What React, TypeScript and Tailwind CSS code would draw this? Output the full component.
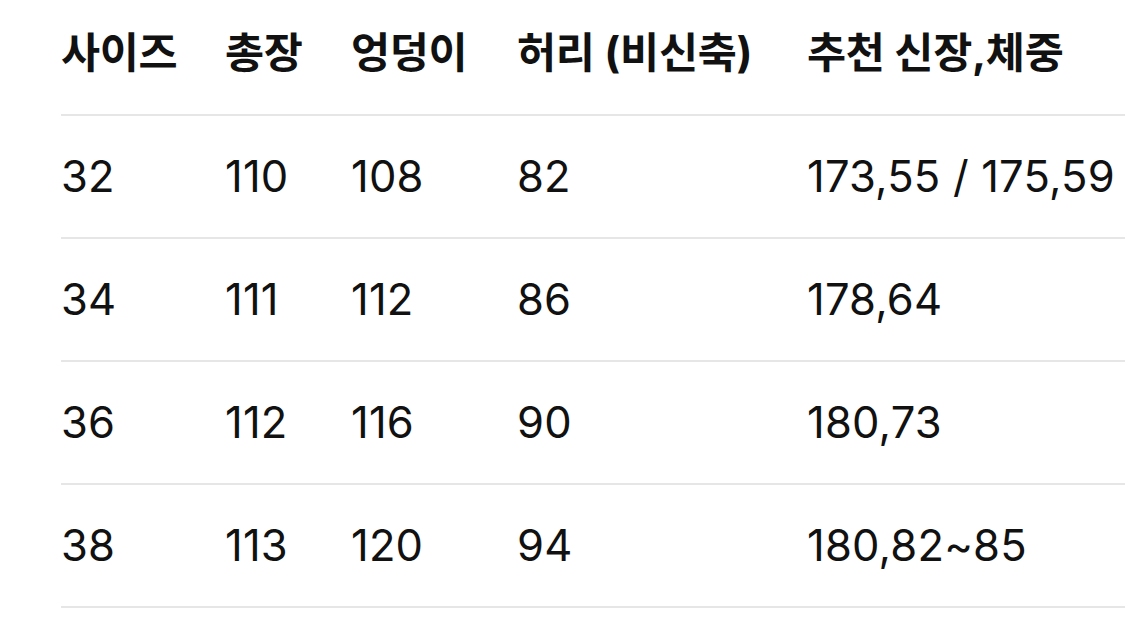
import React from "react";

const rows = [
  ["32", "110", "108", "82", "173,55 / 175,59"],
  ["34", "111", "112", "86", "178,64"],
  ["36", "112", "116", "90", "180,73"],
  ["38", "113", "120", "94", "180,82~85"],
];

const widths = ["w-[164px]", "w-[126px]", "w-[166px]", "w-[290px]", "flex-1"];

export default function App() {
  return (
    <div
      className="w-[1125px] h-[643px] bg-white pl-[61px] text-[#111] overflow-hidden"
      style={{ fontFamily: 'Inter, "Noto Sans CJK KR", sans-serif' }}
    >
      <div className="flex h-[116px] items-center pb-[8px] border-b-2 border-[#e6e6e6] text-[42.5px] font-bold tracking-[-0.3px]">
        {["사이즈", "총장", "엉덩이", "허리 (비신축)", "추천 신장,체중"].map((h, i) => (
          <div key={i} className={`${widths[i]} whitespace-nowrap`}>{h}</div>
        ))}
      </div>
      {rows.map((r, ri) => (
        <div key={ri} className="flex h-[123px] items-center border-b-2 border-[#e6e6e6] text-[43.5px] font-normal tracking-[0.2px]">
          {r.map((c, i) => (
            <div key={i} className={`${widths[i]} whitespace-nowrap`}>{c}</div>
          ))}
        </div>
      ))}
    </div>
  );
}
